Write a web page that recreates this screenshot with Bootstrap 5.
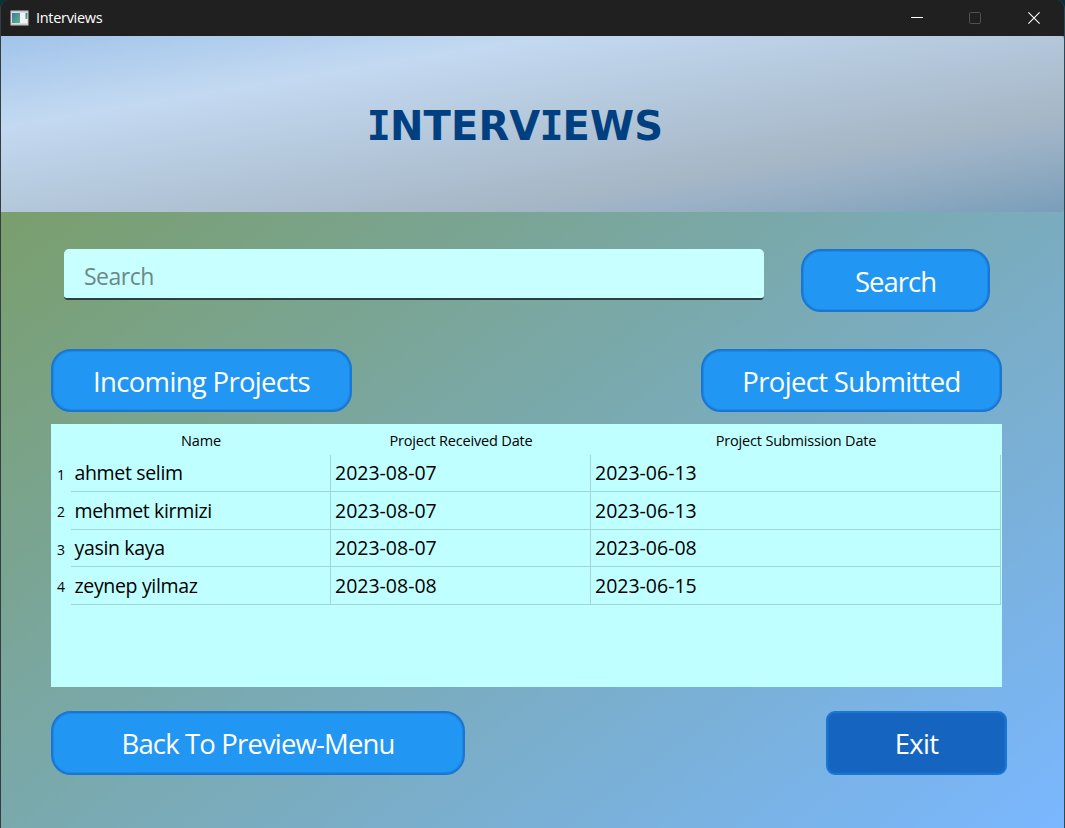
<!DOCTYPE html>
<html lang="en">
<head>
<meta charset="utf-8">
<title>Interviews</title>
<meta name="viewport" content="width=device-width, initial-scale=1">
<link href="https://cdn.jsdelivr.net/npm/bootstrap@5.3.0/dist/css/bootstrap.min.css" rel="stylesheet">
<style>
  body { background: #06303c; font-family: "Open Sans", "Noto Sans", sans-serif; }
  .app-window { height: 828px; border-left: 1px solid #343d42; border-right: 1px solid #2b4a55; border-radius: 9px 9px 0 0; background: linear-gradient(to bottom right, #7a9b5a, #7ab7ff) 0 36px / 100% 792px no-repeat; }
  .title-bar { height: 36px; background: #202020; color: #fff; font-size: 14.5px; letter-spacing: -.3px; padding: 0 1px 1px 9px; }
  .title-bar .me-auto { margin-left: 7px; }
  .win-btn { width: 58.5px; height: 35px; }
  .banner { height: 176px; border-radius: 0 4px 4px 0; background: linear-gradient(to bottom right, #a1c4ea, #c3d9f1 26%, #a6b7c6 72%, #a0b4c7 77%, #7a9eb9); }
  .banner h1 { font: bold 40px/48px "DejaVu Sans", sans-serif; color: #004080; letter-spacing: .1px; padding: 4px 34px 0 0; }
  .slab { font-family: "DejaVu Sans Mono", monospace; margin: 0 -1px; }
  .body-area { padding: 37px 57px 0 50px; }
  .pill { --bs-btn-color: #fff; --bs-btn-bg: #2196f3; --bs-btn-border-color: #1976d2; --bs-btn-hover-color: #fff; --bs-btn-hover-bg: #1e88e5; --bs-btn-hover-border-color: #1976d2; box-shadow: inset 0 0 0 1px rgba(25, 118, 210, .4); height: 63px; border-width: 2px; border-radius: 20px; font-size: 27.5px; line-height: 40px; padding: 3px 0 0; letter-spacing: -.68px; }
  .pill-exit { --bs-btn-bg: #1565c0; width: 181px; height: 64px; border-radius: 9px; padding-top: 1px; }
  .pill-search { width: 189px; margin-left: 37px; letter-spacing: -1px; }
  .half { width: 301px; }
  .back { width: 414px; height: 64px; padding-top: 1px; letter-spacing: -.85px; }
  .second-row { width: 951px; margin-top: 37px; }
  .last-row { margin-top: 24px; }
  .search-field { width: 700px; height: 51px; margin-left: 13px; border: 0; border-bottom: 2px solid #2c4040; border-radius: 5px 5px 4px 4px; background: #c8ffff; font-size: 23px; padding: 4px 20px 0; letter-spacing: -.5px; }
  .search-field::placeholder { color: #6c8888; opacity: 1; }
  .grid-box { width: 951px; height: 263px; background: #c0ffff; color: #000; margin-top: 12px; }
  .data-grid { width: 950px; table-layout: fixed; border-collapse: separate; border-spacing: 0; }
  .c-num { width: 20px; }
  .c-date { width: 260px; }
  .data-grid thead th { height: 31px; padding: 2px 0 0; font-weight: 400; font-size: 14.5px; line-height: 20px; letter-spacing: -.18px; text-align: center; }
  .data-grid tbody th { padding: 2px 0 0; font-weight: 400; font-size: 14px; text-align: center; line-height: 20px; }
  .data-grid td { height: 37px; padding: 0 4px; font-size: 19.5px; line-height: 26px; border-right: 1px solid #a0d6d6; border-bottom: 1px solid #a0d6d6; }
  .data-grid tr:nth-child(even) td { height: 38px; }
  .data-grid td:nth-child(2) { padding-left: 3.5px; letter-spacing: -.34px; }
</style>
</head>
<body class="m-0 overflow-hidden">
<div class="app-window overflow-hidden">
  <header class="title-bar d-flex align-items-center">
    <svg width="19" height="16" viewBox="0 0 19 16">
      <defs><linearGradient id="pane" x1="0" y1="0" x2="1" y2="1"><stop offset="0" stop-color="#3c79a5"/><stop offset="1" stop-color="#63b482"/></linearGradient></defs>
      <rect x=".5" y=".5" width="18" height="15" fill="#c4c8ca"/>
      <rect x="1.5" y="2.5" width="16" height="11" fill="#f1f3f4"/>
      <rect x="2" y="3" width="8" height="10" fill="url(#pane)"/>
      <rect x="15.5" y="3" width="2" height="6" fill="url(#pane)"/>
    </svg>
    <span class="me-auto">Interviews</span>
    <span class="win-btn d-flex align-items-center justify-content-center"><svg width="12" height="12"><path d="M0 5.5h12" stroke="#fff"/></svg></span>
    <span class="win-btn d-flex align-items-center justify-content-center"><svg width="12" height="12"><rect x=".5" y=".5" width="11" height="11" rx="1.2" fill="none" stroke="#505050"/></svg></span>
    <span class="win-btn d-flex align-items-center justify-content-center"><svg width="12" height="12"><path d="M.4.4l11.2 11.2M11.6.4L.4 11.6" stroke="#fff" stroke-width="1.1"/></svg></span>
  </header>
  <section class="banner d-flex align-items-center justify-content-center">
    <h1 class="m-0"><span class="slab">I</span>NTERV<span class="slab">I</span>EWS</h1>
  </section>
  <main class="body-area">
    <div class="d-flex align-items-start">
      <input class="search-field form-control flex-shrink-0" type="text" placeholder="Search">
      <button class="btn pill pill-search flex-shrink-0">Search</button>
    </div>
    <div class="d-flex justify-content-between second-row">
      <button class="btn pill half">Incoming Projects</button>
      <button class="btn pill half">Project Submitted</button>
    </div>
    <div class="grid-box">
      <table class="data-grid">
        <colgroup><col class="c-num"><col class="c-date"><col class="c-date"><col></colgroup>
        <thead><tr><th></th><th>Name</th><th>Project Received Date</th><th>Project Submission Date</th></tr></thead>
        <tbody>
          <tr><th>1</th><td>ahmet selim</td><td>2023-08-07</td><td>2023-06-13</td></tr>
          <tr><th>2</th><td>mehmet kirmizi</td><td>2023-08-07</td><td>2023-06-13</td></tr>
          <tr><th>3</th><td>yasin kaya</td><td>2023-08-07</td><td>2023-06-08</td></tr>
          <tr><th>4</th><td>zeynep yilmaz</td><td>2023-08-08</td><td>2023-06-15</td></tr>
        </tbody>
      </table>
    </div>
    <div class="d-flex justify-content-between last-row">
      <button class="btn pill back">Back To Preview-Menu</button>
      <button class="btn pill pill-exit">Exit</button>
    </div>
  </main>
</div>
<script src="https://cdn.jsdelivr.net/npm/bootstrap@5.3.0/dist/js/bootstrap.bundle.min.js"></script>
</body>
</html>
